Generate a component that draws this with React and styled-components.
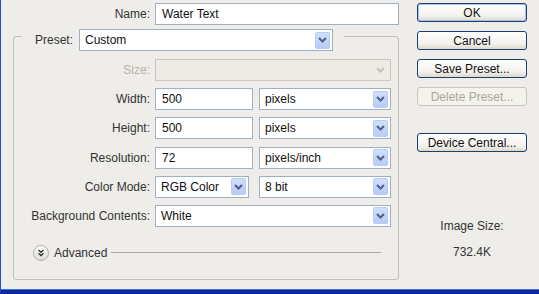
import React from 'react';
import styled, { createGlobalStyle } from 'styled-components';

const Global = createGlobalStyle`
    html, body {
        margin: 0;
        padding: 0;
        background: #eeede9;
    }
    * { box-sizing: border-box; }
`

const Frame = styled.div`
    width: 539px;
    height: 294px;
    display: flex;
    background: #eeede9;
    border-left: 1px solid #1f4fd8;
    border-bottom: 4px solid #0a2a9a;
    box-shadow: inset 0 -1px 0 #3d6fe0;
    font-family: "Liberation Sans", Arial, sans-serif;
    font-size: 12px;
    color: #333;
    overflow: hidden;
`

const FormColumn = styled.div`
    width: 386px;
    margin-left: 12px;
    padding-top: 3px;
    display: flex;
    flex-direction: column;
`

const NameRow = styled.div`
    display: flex;
    align-items: center;
    gap: 5px;
`

const Label = styled.span`
    color: ${p => (p.$disabled ? '#b4b2a6' : '#333')};
    white-space: nowrap;
`

const NameLabel = styled(Label)`
    width: 137px;
    text-align: right;
`

const TextBox = styled.div`
    flex: ${p => (p.$w ? `0 0 ${p.$w}px` : '1')};
    height: 22px;
    display: flex;
    align-items: center;
    padding-left: 6px;
    background: #fff;
    border: 1px solid #9fb0c4;
    color: #111;
`

const Group = styled.fieldset`
    margin: 4px 0 0 0;
    padding: 16px 6px 18px 8px;
    border: 1px solid #c2c1bb;
    border-radius: 3px;
    min-width: 0;
`

const Legend = styled.legend`
    height: 14px;
    padding: 0 11px 0 13px;
    display: flex;
    align-items: flex-start;
`

const PresetRow = styled.div`
    height: 22px;
    display: flex;
    align-items: center;
    gap: 6px;
`

const Rows = styled.div`
    display: grid;
    grid-template-columns: 128px 236px;
    grid-auto-rows: 22px;
    column-gap: 5px;
    row-gap: 7.2px;
    align-items: center;
`

const RowLabel = styled(Label)`
    text-align: right;
`

const Split = styled.div`
    display: flex;
    gap: ${p => p.$gap}px;
    height: 22px;
`

const SelectBox = styled.div`
    flex: ${p => (p.$w ? `0 0 ${p.$w}px` : '1')};
    height: 22px;
    display: flex;
    align-items: center;
    padding: 0 2px 0 5px;
    background: ${p => (p.$disabled ? '#ecebe4' : '#fff')};
    border: 1px solid ${p => (p.$disabled ? '#cac8bd' : '#9fb0c4')};
    color: #111;
`

const SelectText = styled.span`
    flex: 1;
    white-space: nowrap;
    overflow: hidden;
`

const DropButton = styled.div`
    width: 15px;
    height: 17px;
    display: flex;
    align-items: center;
    justify-content: center;
    border-radius: 2px;
    background: ${p => (p.$disabled ? 'transparent' : 'linear-gradient(#d2defc, #b7cbf7)')};
    border: 1px solid ${p => (p.$disabled ? 'transparent' : '#b8cbf3')};
`

const AdvancedRow = styled.div`
    display: flex;
    align-items: center;
    margin: 18px 11px 0 11px;
    height: 16px;
`

const AdvancedText = styled.span`
    margin-left: 5px;
    color: #333;
`

const Rule = styled.div`
    flex: 1;
    height: 1px;
    margin-left: 4px;
    background: #a9a8a2;
`

const ButtonColumn = styled.div`
    width: 110px;
    margin-left: 18px;
    padding-top: 3px;
    display: flex;
    flex-direction: column;
    align-items: stretch;
`

const Button = styled.div`
    height: 19px;
    margin-top: ${p => p.$top}px;
    display: flex;
    align-items: center;
    justify-content: center;
    border: 1px solid ${p => (p.$disabled ? '#c9c7ba' : '#1e3f6e')};
    border-radius: 3px;
    background: ${p => (p.$disabled ? '#f3f2ec' : 'linear-gradient(#ffffff, #f2f1ec 70%, #dcd8cc)')};
    box-shadow: ${p => (p.$default ? 'inset 0 0 0 1px #a7c2ee' : 'none')};
    color: ${p => (p.$disabled ? '#aca899' : '#111')};
    white-space: nowrap;
`

const SizeInfo = styled.div`
    margin-top: 67px;
    display: flex;
    flex-direction: column;
    align-items: center;
    gap: 12px;
    color: #333;
`

const Chevron = ({ disabled }) => (
    <svg width="9" height="6" viewBox="0 0 9 6">
        <path d="M1 1 L4.5 4.5 L8 1" fill="none" stroke={disabled ? '#c4c2b8' : '#4d6185'} strokeWidth="2" />
    </svg>
)

const Select = ({ value, w, disabled }) => (
    <SelectBox $w={w} $disabled={disabled}>
        <SelectText>{value}</SelectText>
        <DropButton $disabled={disabled}><Chevron disabled={disabled} /></DropButton>
    </SelectBox>
)

const AdvancedIcon = () => (
    <svg width="16" height="16" viewBox="0 0 16 16">
        <defs>
            <linearGradient id="adv" x1="0" y1="0" x2="0" y2="1">
                <stop offset="0" stopColor="#ffffff" />
                <stop offset="1" stopColor="#dedbd2" />
            </linearGradient>
        </defs>
        <circle cx="8" cy="8" r="7.5" fill="url(#adv)" stroke="#b3b1a8" />
        <path d="M5.5 5 L8 7.3 L10.5 5 M5.5 8.3 L8 10.6 L10.5 8.3" fill="none" stroke="#333" strokeWidth="1.3" />
    </svg>
)

export const App = () => {
    return (
        <>
            <Global />
            <Frame>
                <FormColumn>
                    <NameRow>
                        <NameLabel>Name:</NameLabel>
                        <TextBox>Water Text</TextBox>
                    </NameRow>
                    <Group>
                        <Legend>
                            <PresetRow>
                                <Label>Preset:</Label>
                                <SelectBox $w={254}>
                                    <SelectText>Custom</SelectText>
                                    <DropButton><Chevron /></DropButton>
                                </SelectBox>
                            </PresetRow>
                        </Legend>
                        <Rows>
                            <RowLabel $disabled>Size:</RowLabel>
                            <Select value="" disabled />

                            <RowLabel>Width:</RowLabel>
                            <Split $gap={6}>
                                <TextBox $w={98}>500</TextBox>
                                <Select value="pixels" />
                            </Split>

                            <RowLabel>Height:</RowLabel>
                            <Split $gap={6}>
                                <TextBox $w={98}>500</TextBox>
                                <Select value="pixels" />
                            </Split>

                            <RowLabel>Resolution:</RowLabel>
                            <Split $gap={6}>
                                <TextBox $w={98}>72</TextBox>
                                <Select value="pixels/inch" />
                            </Split>

                            <RowLabel>Color Mode:</RowLabel>
                            <Split $gap={10}>
                                <Select value="RGB Color" w={94} />
                                <Select value="8 bit" />
                            </Split>

                            <RowLabel>Background Contents:</RowLabel>
                            <Select value="White" />
                        </Rows>
                        <AdvancedRow>
                            <AdvancedIcon />
                            <AdvancedText>Advanced</AdvancedText>
                            <Rule />
                        </AdvancedRow>
                    </Group>
                </FormColumn>
                <ButtonColumn>
                    <Button $top={0} $default>OK</Button>
                    <Button $top={9}>Cancel</Button>
                    <Button $top={9}>Save Preset...</Button>
                    <Button $top={9} $disabled>Delete Preset...</Button>
                    <Button $top={27}>Device Central...</Button>
                    <SizeInfo>
                        <span>Image Size:</span>
                        <span>732.4K</span>
                    </SizeInfo>
                </ButtonColumn>
            </Frame>
        </>
    );
}
export default App;
